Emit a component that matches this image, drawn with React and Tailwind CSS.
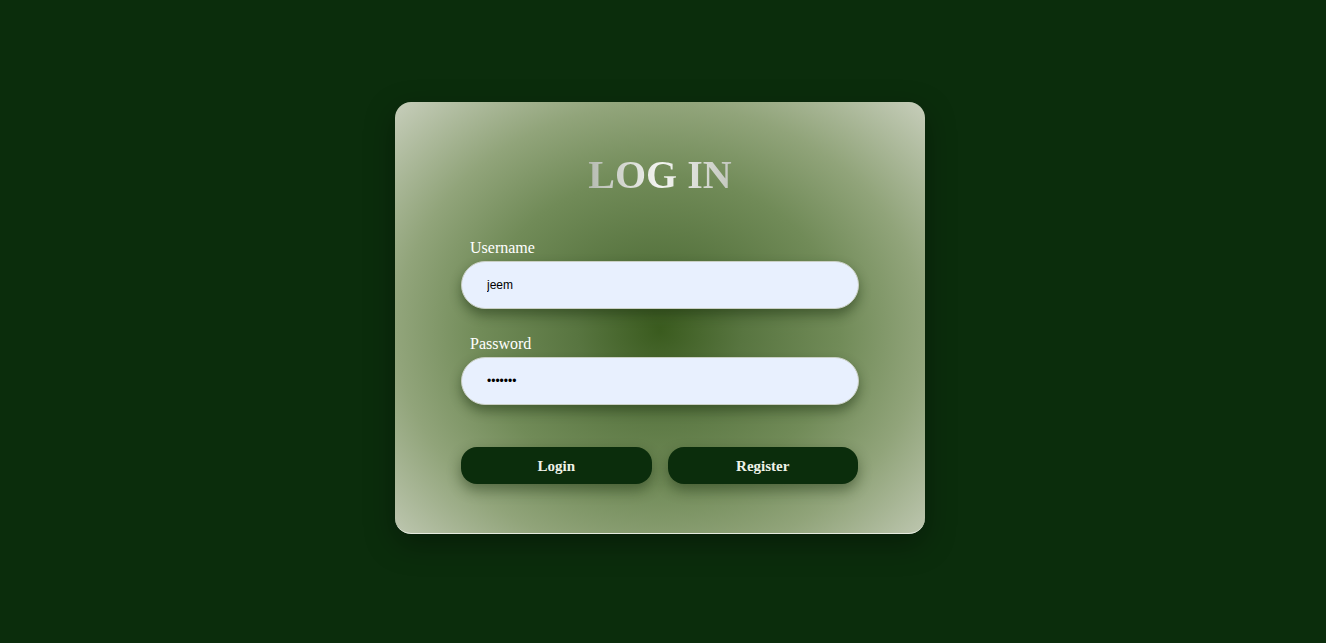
import React, { useState } from 'react';

const App = () => {
  const [username, setUsername] = useState('jeem');
  const [password, setPassword] = useState('1234567');

  return (
    <div className="min-h-screen w-full bg-[#0b2d0c] flex items-center justify-center pr-[6px] pb-[7px]">
      <div className="w-[530px] h-[432px] rounded-[16px] border-b border-[#e6ebe0] shadow-[0_10px_30px_rgba(0,0,0,0.35)] bg-[radial-gradient(ellipse_at_50%_53%,#3a5b1e_0%,#587540_22%,#718b58_48%,#91a47a_70%,#c7cebb_100%)] flex flex-col items-center">
        <h1 className="mt-[53px] text-[40px] leading-none font-bold font-['Liberation_Serif',serif] bg-gradient-to-r from-[#b5bab0] via-[#f4f5f2] to-[#c3c7be] bg-clip-text text-transparent">
          LOG IN
        </h1>

        <form className="w-[398px] mt-[41px] flex flex-col" onSubmit={(e) => e.preventDefault()}>
          <label className="pl-[9px] mb-[1px] text-[16px] leading-6 text-white font-['Liberation_Serif',serif]">
            Username
          </label>
          <input
            type="text"
            value={username}
            onChange={(e) => setUsername(e.target.value)}
            className="h-[48px] w-full rounded-full bg-[#e8f0fe] border border-[#c9cfc4] pl-[25px] text-[12px] text-black font-['Liberation_Sans',sans-serif] outline-none shadow-[0_6px_12px_rgba(20,40,10,0.45)]"
          />

          <label className="mt-[23px] pl-[9px] mb-[1px] text-[16px] leading-6 text-white font-['Liberation_Serif',serif]">
            Password
          </label>
          <input
            type="password"
            value={password}
            onChange={(e) => setPassword(e.target.value)}
            className="h-[48px] w-full rounded-full bg-[#e8f0fe] border border-[#c9cfc4] pl-[25px] text-[12px] text-black font-['Liberation_Sans',sans-serif] outline-none shadow-[0_6px_12px_rgba(20,40,10,0.45)]"
          />

          <div className="mt-[42px] flex gap-[16px] pr-[1px]">
            <button className="flex-1 h-[37px] pt-[2px] rounded-[16px] bg-[#0b2d0c] text-[#eef2e8] text-[15px] font-bold font-['Liberation_Serif',serif] shadow-[0_6px_14px_rgba(20,40,10,0.45)]">
              Login
            </button>
            <button className="flex-1 h-[37px] pt-[2px] rounded-[16px] bg-[#0b2d0c] text-[#eef2e8] text-[15px] font-bold font-['Liberation_Serif',serif] shadow-[0_6px_14px_rgba(20,40,10,0.45)]">
              Register
            </button>
          </div>
        </form>
      </div>
    </div>
  );
};

export default App;
